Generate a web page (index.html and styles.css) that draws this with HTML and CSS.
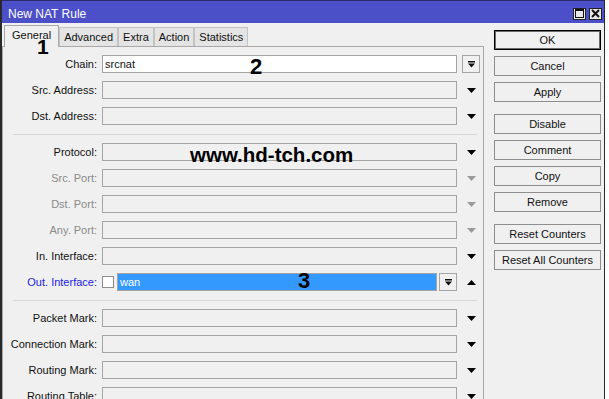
FILE: index.html
```html
<!DOCTYPE html>
<html lang="en">
  <head>
    <meta charset="UTF-8" />
    <title>New NAT Rule</title>
    <link rel="stylesheet" href="styles.css">
  </head>
  <body>
    <div class="window">
      <div class="titlebar">
        <span class="title">New NAT Rule</span>
        <span class="title-btn">
          <svg width="9" height="9" viewBox="0 0 9 9"><rect x="0.5" y="0.5" width="8" height="8" fill="none" stroke="#111" /><rect x="0" y="0" width="9" height="2" fill="#111" /></svg>
        </span>
        <span class="title-btn">
          <svg width="9" height="9" viewBox="0 0 9 9"><path d="M1 1 L8 8 M8 1 L1 8" stroke="#111" stroke-width="2" /></svg>
        </span>
      </div>

      <div class="content">
        <div class="main">
          <div class="tabs">
            <span class="tab active">General</span>
            <span class="tab">Advanced</span>
            <span class="tab">Extra</span>
            <span class="tab">Action</span>
            <span class="tab">Statistics</span>
          </div>

          <div class="panel">
            <div class="row">
              <label>Chain:</label>
              <div class="field white">srcnat</div>
              <span class="dropbox">
                <svg width="7" height="7" viewBox="0 0 7 7"><rect x="0" y="0" width="7" height="1.5" fill="#111" /><polygon points="0,2.5 7,2.5 3.5,6.5" fill="#111" /></svg>
              </span>
            </div>
            <div class="row">
              <label>Src. Address:</label>
              <div class="field"></div>
              <span class="arrow"><svg width="9" height="5" viewBox="0 0 9 5"><polygon points="0,0 9,0 4.5,5" /></svg></span>
            </div>
            <div class="row">
              <label>Dst. Address:</label>
              <div class="field"></div>
              <span class="arrow"><svg width="9" height="5" viewBox="0 0 9 5"><polygon points="0,0 9,0 4.5,5" /></svg></span>
            </div>

            <div class="sep"></div>

            <div class="row">
              <label>Protocol:</label>
              <div class="field"></div>
              <span class="arrow"><svg width="9" height="5" viewBox="0 0 9 5"><polygon points="0,0 9,0 4.5,5" /></svg></span>
            </div>
            <div class="row disabled">
              <label>Src. Port:</label>
              <div class="field"></div>
              <span class="arrow"><svg width="9" height="5" viewBox="0 0 9 5"><polygon points="0,0 9,0 4.5,5" /></svg></span>
            </div>
            <div class="row disabled">
              <label>Dst. Port:</label>
              <div class="field"></div>
              <span class="arrow"><svg width="9" height="5" viewBox="0 0 9 5"><polygon points="0,0 9,0 4.5,5" /></svg></span>
            </div>
            <div class="row disabled">
              <label>Any. Port:</label>
              <div class="field"></div>
              <span class="arrow"><svg width="9" height="5" viewBox="0 0 9 5"><polygon points="0,0 9,0 4.5,5" /></svg></span>
            </div>
            <div class="row">
              <label>In. Interface:</label>
              <div class="field"></div>
              <span class="arrow"><svg width="9" height="5" viewBox="0 0 9 5"><polygon points="0,0 9,0 4.5,5" /></svg></span>
            </div>
            <div class="row">
              <label class="active-label">Out. Interface:</label>
              <div class="combo">
                <span class="check"></span>
                <div class="field selected">wan</div>
                <span class="dropbox">
                  <svg width="7" height="7" viewBox="0 0 7 7"><rect x="0" y="0" width="7" height="1.5" fill="#111" /><polygon points="0,2.5 7,2.5 3.5,6.5" fill="#111" /></svg>
                </span>
              </div>
              <span class="arrow"><svg width="9" height="5" viewBox="0 0 9 5"><polygon points="0,5 9,5 4.5,0" /></svg></span>
            </div>

            <div class="sep"></div>

            <div class="row">
              <label>Packet Mark:</label>
              <div class="field"></div>
              <span class="arrow"><svg width="9" height="5" viewBox="0 0 9 5"><polygon points="0,0 9,0 4.5,5" /></svg></span>
            </div>
            <div class="row">
              <label>Connection Mark:</label>
              <div class="field"></div>
              <span class="arrow"><svg width="9" height="5" viewBox="0 0 9 5"><polygon points="0,0 9,0 4.5,5" /></svg></span>
            </div>
            <div class="row">
              <label>Routing Mark:</label>
              <div class="field"></div>
              <span class="arrow"><svg width="9" height="5" viewBox="0 0 9 5"><polygon points="0,0 9,0 4.5,5" /></svg></span>
            </div>
            <div class="row">
              <label>Routing Table:</label>
              <div class="field"></div>
              <span class="arrow"><svg width="9" height="5" viewBox="0 0 9 5"><polygon points="0,0 9,0 4.5,5" /></svg></span>
            </div>
          </div>
        </div>

        <div class="side">
          <div class="group">
            <button class="default">OK</button>
            <button>Cancel</button>
            <button>Apply</button>
          </div>
          <div class="group">
            <button>Disable</button>
            <button>Comment</button>
            <button>Copy</button>
            <button>Remove</button>
          </div>
          <div class="group">
            <button>Reset Counters</button>
            <button>Reset All Counters</button>
          </div>
        </div>
      </div>

      <!-- marcas sobre la captura -->
      <span class="mark mark-1">1</span>
      <span class="mark mark-2">2</span>
      <span class="mark mark-3">3</span>
      <span class="mark site">www.hd-tch.com</span>
    </div>
  </body>
</html>
```

FILE: styles.css
```css
body {
  margin: 0;
  background: #ffffff;
  font-family: "Liberation Sans", Arial, sans-serif;
  font-size: 11px;
  color: #111;
}
.window {
  position: relative;
  width: 605px;
  height: 399px;
  box-sizing: border-box;
  border-left: 2px solid #2a2a2a;
  border-right: 1px solid #2a2a2a;
  background: #f0f0f0;
  overflow: hidden;
}
.titlebar {
  display: flex;
  align-items: center;
  gap: 3px;
  height: 23px;
  box-sizing: border-box;
  padding: 3px 2px 0 6px;
  background: #4b50c9;
  border-top: 1px solid #2a2a6a;
}
.title {
  color: #fff;
  font-size: 12px;
  margin-right: auto;
}
.title-btn {
  display: flex;
  align-items: center;
  justify-content: center;
  width: 13px;
  height: 12px;
  box-sizing: border-box;
  background: #e8e8e8;
  border: 1px solid #222;
}
.content {
  display: flex;
}
.main {
  width: 482px;
}
.tabs {
  display: flex;
  align-items: flex-end;
  height: 23px;
  padding-left: 2px;
}
.tab {
  display: flex;
  align-items: center;
  height: 19px;
  box-sizing: border-box;
  padding: 0 4px;
  background: #e4e4e4;
  border: 1px solid #c4c4c4;
  border-bottom: none;
}
.tab.active {
  height: 22px;
  padding: 0 7px 4px 7px;
  background: #f0f0f0;
  border-color: #a8a8a8;
  margin-bottom: -1px;
  position: relative;
  z-index: 1;
}
.panel {
  border-top: 1px solid #a8a8a8;
  border-left: 1px solid #a8a8a8;
  border-right: 1px solid #a8a8a8;
  height: 360px;
  padding-top: 8px;
  display: flex;
  flex-direction: column;
  gap: 8px;
}
.row {
  display: grid;
  grid-template-columns: 94px 355px 19px;
  column-gap: 5px;
  align-items: center;
  height: 18px;
}
.row label {
  text-align: right;
  white-space: nowrap;
}
.row.disabled label {
  color: #8a8a8a;
}
.row.disabled .arrow svg {
  fill: #9a9a9a;
}
.active-label {
  color: #2222e6;
}
.field {
  height: 18px;
  box-sizing: border-box;
  border: 1px solid #a4a4a4;
  background: #f0f0f0;
  padding: 1px 2px;
  line-height: 14px;
}
.field.white {
  background: #fff;
}
.field.selected {
  flex: 1;
  background: #3399ff;
  color: #fff;
}
.combo {
  display: flex;
  align-items: center;
}
.check {
  width: 12px;
  height: 12px;
  box-sizing: border-box;
  background: #fff;
  border: 1px solid #8c8c8c;
  margin-right: 3px;
}
.combo .dropbox {
  margin-left: 2px;
}
.dropbox {
  display: flex;
  align-items: center;
  justify-content: center;
  width: 18px;
  height: 18px;
  box-sizing: border-box;
  border: 1px solid #a4a4a4;
  background: #f0f0f0;
}
.arrow {
  display: flex;
  justify-content: center;
  fill: #000;
}
.sep {
  height: 0;
  margin: 1px 6px 0 10px;
  border-top: 1px solid #d8d8d8;
}
.side {
  display: flex;
  flex-direction: column;
  gap: 12px;
  padding: 7px 0 0 10px;
}
.group {
  display: flex;
  flex-direction: column;
  gap: 6px;
}
button {
  width: 107px;
  height: 20px;
  box-sizing: border-box;
  padding: 0;
  font-family: "Liberation Sans", Arial, sans-serif;
  font-size: 11px;
  color: #111;
  background: #f0f0f0;
  border: 1px solid #8e8e8e;
  border-radius: 0;
}
button.default {
  border: 1px solid #000;
  box-shadow: inset 0 0 0 1px #6a6a6a;
}
.mark {
  position: absolute;
  z-index: 2;
  font-family: "Liberation Sans", Arial, sans-serif;
  font-weight: bold;
  color: #000;
  line-height: 1;
}
.mark-1 {
  left: 35px;
  top: 36px;
  font-size: 21px;
}
.mark-2 {
  left: 248px;
  top: 56px;
  font-size: 22px;
}
.mark-3 {
  left: 296px;
  top: 270px;
  font-size: 22px;
}
.site {
  left: 188px;
  top: 145px;
  font-size: 20.5px;
}
```
